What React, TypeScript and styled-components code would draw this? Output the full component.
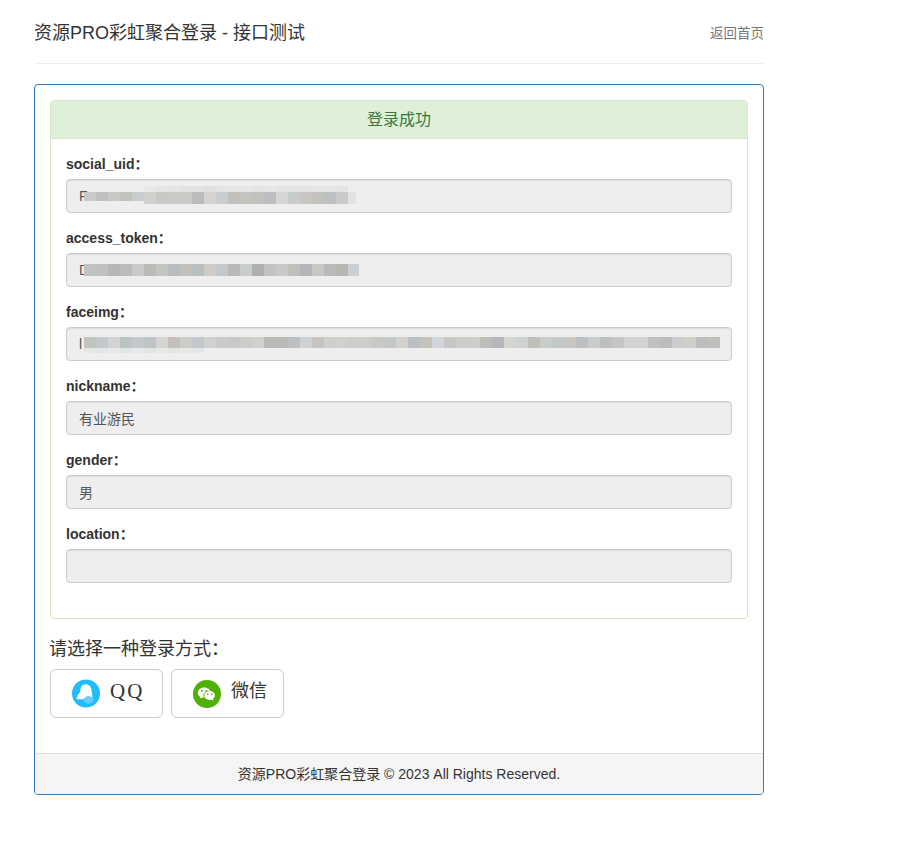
import React from "react";
import styled, { createGlobalStyle } from "styled-components";

const Global = createGlobalStyle`
  * { box-sizing: border-box; }
  html, body { margin: 0; padding: 0; background: #fff; }
  body {
    font-family: "Liberation Sans", "Noto Sans CJK SC", sans-serif;
    font-size: 14px;
    line-height: 20px;
    color: #333;
  }
`;

const Page = styled.div`
  width: 730px;
  margin-left: 34px;
  padding-bottom: 73px;
`;

const Header = styled.header`
  display: flex;
  align-items: center;
  justify-content: space-between;
  height: 64px;
  padding-top: 3px;
  margin-bottom: 20px;
  border-bottom: 1px solid #eee;
`;

const Title = styled.h3`
  margin: 0;
  font-size: 18px;
  font-weight: 400;
  line-height: 20px;
  color: #333;
`;

const HomeLink = styled.a`
  margin-top: 1px;
  color: #777;
  font-size: 13.5px;
  text-decoration: none;
`;

const Panel = styled.section`
  border: 1px solid #337ab7;
  border-radius: 4px;
`;

const PanelBody = styled.div`
  padding: 15px;
`;

const ResultPanel = styled.div`
  border: 1px solid #d6e9c6;
  border-radius: 4px;
  margin-bottom: 20px;
`;

const ResultHeading = styled.div`
  height: 38px;
  background: #dff0d8;
  border-bottom: 1px solid #d6e9c6;
  border-radius: 3px 3px 0 0;
  color: #3c763d;
  font-size: 16px;
  line-height: 37px;
  text-align: center;
`;

const ResultBody = styled.div`
  padding: 15px 15px 20px;
`;

const FormGroup = styled.div`
  margin-bottom: 15px;
`;

const Label = styled.label`
  display: block;
  margin-bottom: 5px;
  font-weight: 700;
  color: #333;
`;

const Field = styled.div`
  position: relative;
  height: 34px;
`;

const Input = styled.input`
  display: block;
  width: 100%;
  height: 34px;
  padding: 6px 12px;
  font: inherit;
  color: #555;
  background: #eee;
  border: 1px solid #ccc;
  border-radius: 4px;
  box-shadow: inset 0 1px 1px rgba(0, 0, 0, 0.075);
  outline: none;
`;

const MosaicLayer = styled.svg`
  position: absolute;
  left: 0;
  top: 0;
  pointer-events: none;
`;

const ChooseTitle = styled.h4`
  margin: 0 0 10px -1px;
  font-size: 18px;
  font-weight: 400;
  line-height: 20px;
  color: #333;
`;

const ButtonRow = styled.div`
  display: flex;
  gap: 8px;
  margin-bottom: 20px;
`;

const LoginButton = styled.a`
  display: flex;
  align-items: center;
  width: 113px;
  height: 49px;
  padding-left: 21px;
  gap: 10px;
  background: #fff;
  border: 1px solid #ccc;
  border-radius: 6px;
  color: #333;
  font-size: 18px;
  text-decoration: none;
`;

const ButtonText = styled.span<{ $spaced?: boolean }>`
  font-family: ${(p) => (p.$spaced ? '"Liberation Serif", serif' : "inherit")};
  font-size: ${(p) => (p.$spaced ? "21px" : "18px")};
  letter-spacing: ${(p) => (p.$spaced ? "2px" : "0")};
  margin-top: -5px;
`;

const Footer = styled.footer`
  height: 41px;
  padding: 10px 15px;
  background: #f5f5f5;
  border-top: 1px solid #ddd;
  border-radius: 0 0 3px 3px;
  text-align: center;
  color: #333;
`;

type Band = { x: number; y: number; h: number; cells: string[]; lastW?: number };

const Mosaic = ({ bands }: { bands: Band[] }) => (
  <MosaicLayer width={666} height={34} viewBox="0 0 666 34" aria-hidden="true">
    {bands.map((b, i) =>
      b.cells.map((c, j) => (
        <rect
          key={`${i}-${j}`}
          x={b.x + j * 12}
          y={b.y}
          width={j === b.cells.length - 1 && b.lastW ? b.lastW : 12}
          height={b.h}
          fill={`#${c}`}
        />
      ))
    )}
  </MosaicLayer>
);

const uidBands: Band[] = [
  { x: 78, y: 7, h: 6, cells: ["e8e8e7", "e6e6e5", "e4e4e3", "e2e2e1", "e2e2e1", "e0e0df", "e4e4e3", "e6e6e5", "e6e6e5", "e4e4e3", "e6e6e5", "e4e4e3", "e4e4e3", "e4e4e3", "e6e6e5", "e6e6e5", "e4e4e3"] },
  { x: 18, y: 13, h: 9, cells: ["c9c9c7", "c0c0be", "c8c8c6", "c2c1bc", "c8cccc"] },
  { x: 78, y: 13, h: 12, cells: ["d0d0ce", "c9c8c4", "c8cac8", "cbc9c6", "b9bbbc", "d4d3d0", "c8cdce", "c3c0bc", "c4c3be", "c2c1be", "bbbdbf", "d5d6d4", "c6cbcc", "c9c5c3", "c3c2bd", "bcc0c3", "cacbc8", "e1e2e3"], lastW: 8 },
];

const tokenBands: Band[] = [
  { x: 18, y: 11, h: 12, lastW: 11, cells: ["c0c2c1", "bec1c0", "b6b6b5", "bbbbba", "c7cac6", "bcbab7", "c3c5c2", "b6bcbf", "c1c0bb", "b8bfc0", "cfcbc7", "c3c9ca", "b8b9b7", "c9cccd", "aeb0ad", "c2c2c2", "c7c9c8", "c0c0ba", "b3b5b9", "c6c8c5", "b8b9b8", "b7b7b1", "cad0d3"] },
];

const faceBands: Band[] = [
  { x: 18, y: 20, h: 6, cells: ["e6e6e5", "e4e5e6", "e8e8e8", "e2e5e6", "e6e8e9", "e2e5e6", "e8e8e7", "e6e4e2", "e8e8e7", "e4e6e8"] },
  { x: 18, y: 10, h: 11, cells: ["c4c4be", "c4c8ca", "d2d3d2", "bcc3c5", "c4c8ca", "bcc4c6", "d5d5d3", "c6c0bc", "ccccca", "c4c8cc", "d0d0ce", "cacaca", "c8c8c6", "ccccc9", "d0d0ce", "bdbab6", "b9bbb9", "bcc0c3", "cfd1d3", "c9c3bf", "cfcfcd", "d0d0cd", "cdcdcc", "ccceca", "c8c9c6", "c4c7c8", "d2d1cd", "b9bfc2", "c5c4bc", "d0d5dc", "c8c6c2", "ccccc8", "cecdc9", "bfbdb8", "b4b8bc", "d4d4d1", "ced2d3", "c1bfba", "c8cdc9", "c0c8c8", "c9c6c2", "bcc0c2", "c9cccb", "bcbfbf", "c5c6c4", "d0d3d1", "d0d3d1", "c0c0c0", "bbbcbb", "cbcdcd", "d0d0c9", "bcbebd", "bfc0bc"] },
];

const QQIcon = () => (
  <svg width="28" height="29" viewBox="0 0 29 29" aria-hidden="true">
    <circle cx="14.5" cy="14.5" r="14.5" fill="#1fbdfd" />
    <path
      d="M14.2 5c3.300 0 5.500 2.600 6 5.800l.8 4.700v5H7.500c-1.700 0-3.300-.3-3.100-1.300.1-.6 1-.8 1.800-.8-.4-.5-.7-1-.6-1.600.2-1.300 2-2.500 3-4.200.2-3.900 1.200-7.600 5.600-7.600z"
      fill="#fff"
    />
    <path d="M11.800 20.500c1.300-2.200 3.300-3.600 5.200-3.500 2.600.1 4.700 1.500 5.700 3.500-1 2.500-3 4.500-5.700 4.500-2.800 0-4.700-2.200-5.200-4.500z" fill="#66cdfb" />
  </svg>
);

const WeChatIcon = () => (
  <svg width="28" height="28" viewBox="0 0 28 28" aria-hidden="true">
    <circle cx="14" cy="14" r="14" fill="#4fb105" />
    <path
      d="M11.300 7.500c-3.600 0-6.500 2.300-6.500 5.200 0 1.600.9 3 2.400 4l-.6 1.900 2.300-1.200c.8.200 1.600.3 2.400.3 3.600 0 6.500-2.300 6.500-5s-2.900-5.200-6.500-5.200z"
      fill="#fff"
    />
    <ellipse cx="16.600" cy="15.600" rx="6.300" ry="5.200" fill="#4fb105" />
    <path
      d="M16.600 11.100c-3 0-5.300 2-5.300 4.500s2.300 4.400 5.300 4.400c.7 0 1.200-.1 1.800-.3l2 1-.6-1.600c1.300-.8 2.100-2.100 2.100-3.500 0-2.500-2.300-4.500-5.300-4.500z"
      fill="#fff"
    />
    <circle cx="8.900" cy="11" r="1" fill="#4fb105" />
    <circle cx="13.300" cy="11" r="1" fill="#4fb105" />
    <circle cx="14.700" cy="14.400" r=".8" fill="#4fb105" />
    <circle cx="18.700" cy="14.400" r=".8" fill="#4fb105" />
  </svg>
);

const fields: { label: string; value: string; bands?: Band[] }[] = [
  { label: "social_uid", value: "F", bands: uidBands },
  { label: "access_token", value: "D", bands: tokenBands },
  { label: "faceimg", value: "l", bands: faceBands },
  { label: "nickname", value: "有业游民" },
  { label: "gender", value: "男" },
  { label: "location", value: "" },
];

export default function App() {
  return (
    <>
      <Global />
      <Page>
        <Header>
          <Title>资源PRO彩虹聚合登录 - 接口测试</Title>
          <HomeLink href="#">返回首页</HomeLink>
        </Header>
        <Panel>
          <PanelBody>
            <ResultPanel>
              <ResultHeading>登录成功</ResultHeading>
              <ResultBody>
                {fields.map((f) => (
                  <FormGroup key={f.label}>
                    <Label>{f.label}：</Label>
                    <Field>
                      <Input readOnly disabled value={f.value} />
                      {f.bands && <Mosaic bands={f.bands} />}
                    </Field>
                  </FormGroup>
                ))}
              </ResultBody>
            </ResultPanel>
            <ChooseTitle>请选择一种登录方式：</ChooseTitle>
            <ButtonRow>
              <LoginButton href="#">
                <QQIcon />
                <ButtonText $spaced>QQ</ButtonText>
              </LoginButton>
              <LoginButton href="#">
                <WeChatIcon />
                <ButtonText>微信</ButtonText>
              </LoginButton>
            </ButtonRow>
          </PanelBody>
          <Footer>资源PRO彩虹聚合登录 © 2023 All Rights Reserved.</Footer>
        </Panel>
      </Page>
    </>
  );
}
